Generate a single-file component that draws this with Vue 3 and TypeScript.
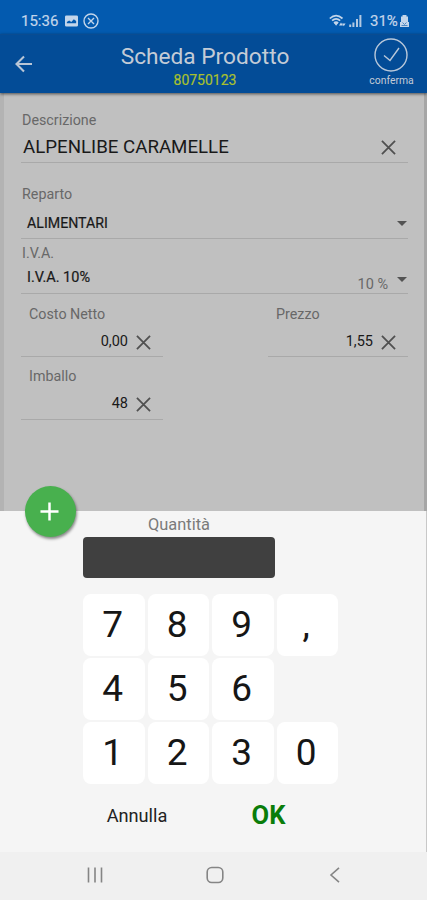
<script setup lang="ts">
import { ref } from 'vue'

interface Key { label: string; area: string }

const keys: Key[] = [
  { label: '7', area: 'k7' },
  { label: '8', area: 'k8' },
  { label: '9', area: 'k9' },
  { label: ',', area: 'comma' },
  { label: '4', area: 'k4' },
  { label: '5', area: 'k5' },
  { label: '6', area: 'k6' },
  { label: '1', area: 'k1' },
  { label: '2', area: 'k2' },
  { label: '3', area: 'k3' },
  { label: '0', area: 'k0' },
]

const quantity = ref('')

function press(label: string) {
  if (label === ',' && quantity.value.includes(',')) return
  if (quantity.value.length < 8) quantity.value += label
}

function clear() {
  quantity.value = ''
}
</script>

<template>
  <div class="screen">
    <div class="status">
      <span class="clock">15:36</span>
      <svg class="s-image" viewBox="0 0 14 12"><path fill-rule="evenodd" d="M1.5 0h11A1.5 1.5 0 0 1 14 1.500v9A1.500 1.500 0 0 1 12.500 12h-11A1.500 1.500 0 0 1 0 10.500v-9A1.500 1.500 0 0 1 1.500 0zM2 8.500h10V6L9.500 4 6.800 7 4.500 5.500 2 7z" /></svg>
      <svg class="s-close" viewBox="0 0 16 16"><circle cx="8" cy="8" r="7" /><path d="M5 5l6 6M11 5l-6 6" /></svg>
      <span class="spacer"></span>
      <svg class="s-wifi" viewBox="0 0 17 14"><path d="M.8 4.500Q7-1.300 13.500 4.500M3.100 6.700Q7 3 11.200 6.700M5 9Q7 7.300 9.200 9" /><path class="solid" d="M5 9h4.200L7.100 11.800zM10 11.500l2-3 2 3zM13 9.500h3.600l-1.800 2.800z" /></svg>
      <svg class="s-signal" viewBox="0 0 13 12"><path d="M1.200 12V9.500M4.400 12V7.500M8 12V4M11.400 12V0" /></svg>
      <span class="battery">31%</span>
      <svg class="s-batt" viewBox="0 0 9 12"><path d="M2.500 0h4v1.500H8V7h1v5H0V7h1V1.500h1.500z" /><path class="cut" d="M2.500 7.500l2 2 2-2M1.500 10.500h6" /></svg>
    </div>

    <header class="bar">
      <svg class="back" viewBox="0 0 18 18"><path d="M17 9H2M9 1.500L1.500 9 9 16.500" /></svg>
      <div class="titles">
        <h1>Scheda Prodotto</h1>
        <span class="code">80750123</span>
      </div>
      <div class="confirm">
        <svg viewBox="0 0 34 34"><circle cx="17" cy="17" r="16" /><path d="M10 17.500l6 5L25 10" /></svg>
        <span>conferma</span>
      </div>
    </header>

    <main class="form">
      <div class="field description">
        <label>Descrizione</label>
        <div class="value"><span>ALPENLIBE CARAMELLE</span><svg class="x" viewBox="0 0 16 16"><path d="M1 1l14 14M15 1L1 15" /></svg></div>
      </div>
      <div class="field department">
        <label>Reparto</label>
        <div class="value"><span>ALIMENTARI</span><i class="caret"></i></div>
      </div>
      <div class="field vat">
        <label>I.V.A.</label>
        <div class="value"><span>I.V.A. 10%</span><span class="rate">10 %</span><i class="caret"></i></div>
      </div>
      <div class="numbers">
        <div class="field small">
          <label>Costo Netto</label>
          <div class="value"><span>0,00</span><svg class="x" viewBox="0 0 16 16"><path d="M1 1l14 14M15 1L1 15" /></svg></div>
        </div>
        <div class="field small">
          <label>Prezzo</label>
          <div class="value"><span>1,55</span><svg class="x" viewBox="0 0 16 16"><path d="M1 1l14 14M15 1L1 15" /></svg></div>
        </div>
        <div class="field small last">
          <label>Imballo</label>
          <div class="value"><span>48</span><svg class="x" viewBox="0 0 16 16"><path d="M1 1l14 14M15 1L1 15" /></svg></div>
        </div>
      </div>
    </main>

    <section class="sheet">
      <button class="fab"><svg viewBox="0 0 20 20"><path d="M10 .5v19M.5 10h19" /></svg></button>
      <div class="qty-label">Quantità</div>
      <div class="display">{{ quantity }}</div>
      <div class="keypad">
        <button v-for="key in keys" :key="key.label" class="key" :class="key.area" @click="press(key.label)">{{ key.label }}</button>
      </div>
      <div class="actions">
        <button class="cancel" @click="clear">Annulla</button>
        <button class="ok">OK</button>
      </div>
    </section>

    <nav class="nav">
      <svg viewBox="0 0 18 18"><path d="M2.500 1.500v15M9 1.500v15M15.500 1.500v15" /></svg>
      <svg viewBox="0 0 18 18"><rect x="1.200" y="1.500" width="15.600" height="15" rx="4.500" /></svg>
      <svg viewBox="0 0 18 18"><path d="M13 1.800L5 9l8 7.200" /></svg>
    </nav>
  </div>
</template>

<style>
body {
  margin: 0;
}
</style>

<style scoped>
.screen {
  display: flex;
  flex-direction: column;
  width: 427px;
  height: 900px;
  overflow: hidden;
  font-family: Roboto, "Liberation Sans", sans-serif;
  background: #f5f5f5;
}
svg {
  display: block;
  flex: none;
  fill: none;
}
button {
  border: 0;
  padding: 0;
  background: none;
  font-family: inherit;
}
.status {
  box-sizing: border-box;
  display: flex;
  align-items: center;
  height: 34px;
  padding: 8px 18px 0 21px;
  background: #035aaf;
  color: #c3d5ea;
  font-size: 15px;
  line-height: 18px;
}
.clock {
  width: 44px;
  -webkit-text-stroke: 0.2px #c3d5ea;
}
.spacer {
  flex: 1;
}
.s-image {
  width: 13px;
  height: 12px;
  fill: #c3d5ea;
}
.s-close {
  width: 16px;
  height: 16px;
  margin-left: 5px;
  stroke: #c3d5ea;
  stroke-width: 1.4;
}
.s-wifi {
  width: 17px;
  height: 14px;
  margin-right: 3px;
  stroke: #c3d5ea;
  stroke-width: 1.7;
}
.s-wifi .solid {
  fill: #c3d5ea;
  stroke: none;
}
.s-signal {
  width: 13px;
  height: 12px;
  margin-right: 8px;
  stroke: #b3c9e2;
  stroke-width: 2;
}
.battery {
  width: 30px;
  white-space: nowrap;
  -webkit-text-stroke: 0.2px #c3d5ea;
}
.s-batt {
  width: 9px;
  height: 12px;
  fill: #c3d5ea;
}
.s-batt .cut {
  fill: none;
  stroke: #4d87c2;
}
.bar {
  position: relative;
  z-index: 1;
  box-sizing: border-box;
  display: grid;
  grid-template-columns: 64px 1fr 64px;
  height: 59px;
  border-top: 1px solid #0a4c91;
  background: #034c97;
  color: #c3cbd6;
  box-shadow: 0 1px 3px rgba(0, 0, 0, 0.6);
}
.back {
  width: 18px;
  height: 18px;
  margin: 20px 0 0 15px;
  stroke: #b9c6d6;
  stroke-width: 2.1;
}
.titles {
  display: flex;
  flex-direction: column;
  align-items: center;
  padding-right: 17px;
}
h1 {
  margin: 8px 0 0;
  font-size: 22.700px;
  line-height: 28px;
  font-weight: 400;
  white-space: nowrap;
}
.code {
  font-size: 14px;
  line-height: 18px;
  color: #a9c02e;
  -webkit-text-stroke: 0.2px #a9c02e;
}
.confirm {
  display: flex;
  flex-direction: column;
  align-items: center;
  padding-top: 3px;
}
.confirm svg {
  width: 34px;
  height: 34px;
  margin-right: 8px;
  stroke: #b9c8da;
  stroke-width: 1.4;
}
.confirm span {
  margin: 2px 7px 0 0;
  font-size: 10.400px;
  line-height: 13px;
  white-space: nowrap;
}
.form {
  box-sizing: border-box;
  height: 418px;
  padding: 0 16px 0 17px;
  border-left: 4px solid #b3b3b3;
  border-right: 3px solid #a6a6a6;
  background: #c0c0c0;
  color: #191919;
}
.field {
  box-sizing: border-box;
  display: flex;
  flex-direction: column;
  border-bottom: 1px solid #a9a9a9;
}
label {
  padding-left: 1px;
  color: #686868;
  font-size: 14.300px;
  line-height: 18px;
}
.value {
  display: flex;
  align-items: center;
  line-height: 24px;
}
.value > :last-child {
  margin-left: auto;
}
.x {
  width: 15px;
  height: 15px;
  stroke: #505050;
  stroke-width: 1.900;
}
.caret {
  width: 0;
  height: 0;
  border: 5.500px solid transparent;
  border-bottom: 0;
  border-top: 5px solid #535353;
}
.description {
  height: 70px;
  padding-top: 18px;
}
.description .value {
  padding: 6px 12px 0 2px;
  font-size: 18.700px;
}
.description .x {
  margin-top: 1px;
}
.department {
  height: 76px;
  padding-top: 22px;
}
.department .value {
  padding: 8px 1px 0 6px;
  font-size: 14.200px;
}
.department .value > :first-child,
.vat .value > :first-child {
  -webkit-text-stroke: 0.2px #191919;
}
.vat {
  height: 55px;
  padding-top: 5px;
}
.vat .value {
  padding: 4px 1px 0 6px;
  font-size: 14.500px;
}
.vat .rate {
  margin: 13px 0 -1px auto;
  line-height: 12px;
  color: #686868;
}
.vat .value > :last-child {
  margin: 3px 0 0 9px;
}
.numbers {
  display: grid;
  grid-template-columns: 142px 140px;
  justify-content: space-between;
}
.small {
  height: 63px;
  padding-top: 11px;
}
.last {
  padding-top: 10px;
}
.small label {
  padding-left: 8px;
}
.small .value {
  justify-content: flex-end;
  gap: 8px;
  padding: 7px 12px 0 0;
  font-size: 14.500px;
}
.small .value > :last-child {
  margin-left: 0;
}
.sheet {
  position: relative;
  z-index: 2;
  box-sizing: border-box;
  display: flex;
  flex-direction: column;
  height: 341px;
  padding: 4px 0 0 83px;
  border-right: 1px solid #c8c8c8;
  background: #f5f5f5;
}
.fab {
  position: absolute;
  left: 25px;
  top: -25px;
  display: flex;
  align-items: center;
  justify-content: center;
  width: 51px;
  height: 51px;
  border-radius: 50%;
  background: #48b04e;
  box-shadow: 1px 2px 3px rgba(0, 0, 0, 0.45);
}
.fab svg {
  width: 19px;
  height: 19px;
  margin-right: 2px;
  stroke: #fff;
  stroke-width: 2.600;
}
.qty-label {
  width: 192px;
  height: 22px;
  color: #7b7b7b;
  font-size: 16.400px;
  line-height: 19px;
  text-align: center;
}
.display {
  box-sizing: border-box;
  width: 192px;
  height: 41px;
  padding: 0 10px;
  border-radius: 4px;
  background: #404040;
  color: #fff;
  font-size: 26px;
  line-height: 41px;
  text-align: right;
}
.keypad {
  display: grid;
  grid-template-columns: repeat(4, 61.500px);
  grid-auto-rows: 62px;
  gap: 2px 3px;
  grid-template-areas: "k7 k8 k9 comma" "k4 k5 k6 ." "k1 k2 k3 k0";
  margin-top: 16px;
}
.key {
  padding-right: 2px;
  border-radius: 8px;
  background: #fff;
  color: #161616;
  font-size: 37px;
  line-height: 62px;
}
.k7 { grid-area: k7; }
.k8 { grid-area: k8; }
.k9 { grid-area: k9; }
.comma { grid-area: comma; }
.k4 { grid-area: k4; }
.k5 { grid-area: k5; }
.k6 { grid-area: k6; }
.k1 { grid-area: k1; }
.k2 { grid-area: k2; }
.k3 { grid-area: k3; }
.k0 { grid-area: k0; }
.actions {
  display: flex;
  align-items: center;
  height: 32px;
  margin-top: 15px;
}
.cancel {
  width: 108px;
  color: #222;
  font-size: 18.200px;
}
.ok {
  width: 155px;
  color: #0a7d0a;
  font-size: 25.500px;
  font-weight: 700;
}
.nav {
  display: flex;
  align-items: center;
  justify-content: space-between;
  flex: 1;
  padding: 0 83px 2px 86px;
  background: #f0f0f0;
}
.nav svg {
  width: 18px;
  height: 18px;
  stroke: #858585;
  stroke-width: 1.600;
}
</style>
